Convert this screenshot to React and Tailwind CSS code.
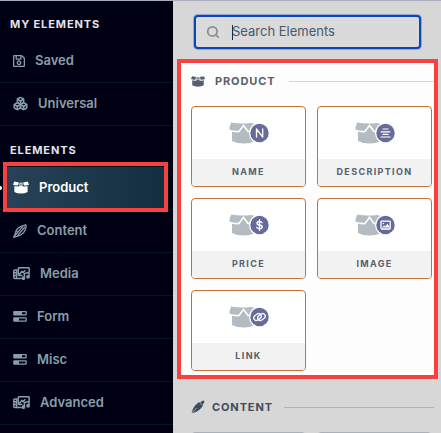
import { useState } from 'react'
import { Boxes, Search } from 'lucide-react'
import { FaRegSave } from 'react-icons/fa'

const BoxIcon = ({ className = 'w-4 h-[13px]' }) => (
  <svg viewBox="0 0 16 12" className={className} fill="currentColor" aria-hidden="true">
    <path d="M1.300 0 6 .9 4.900 3.900Q2.400 4.200 0 3.200Z" />
    <path d="M14.700 0 10 .9l1.100 3q2.500.3 4.900-.7Z" />
    <path d="M6.800.9h2.400l1.200 2.600-1 .5L8 2.600 6.600 4l-1-.5Z" opacity=".7" />
    <path d="M1.400 4.600q2.400.7 4.600.2L8 3.400l2 1.400q2.200.5 4.600-.2v5.800q-2.600 1.600-6.600 1.600t-6.600-1.600Z" />
  </svg>
)

const PenIcon = () => (
  <svg viewBox="0 0 13 13" className="w-3.5 h-3.5" fill="none" stroke="currentColor" strokeWidth="1.200" strokeLinejoin="round" strokeLinecap="round" aria-hidden="true">
    <path d="M.6 12.400 2 9.300C2.300 6.600 4.300 3.800 7 2.400L11.400.8 12.200 1 11.800 4.400C10.800 7.200 8 10 5 11Z" />
    <path d="M2 10.600 8.800 2.600M4.600 10.400 10.800 3M3.200 7l1.200.4" />
  </svg>
)

const SolidPenIcon = () => (
  <svg viewBox="0 0 13 13" className="w-3.5 h-3.5" fill="currentColor" aria-hidden="true">
    <path d="M.6 12.400 1.600 8.500C2.800 6 5 3.400 7.600 1.800l.8.8L10.600.6l1.800.2-.3 1.900-1.200 1.300.2 1.400C9.400 8 7 10.200 4.600 11.200Z" />
    <path d="M1.200 11.800 5.200 7.400M8.200 2.400l2.600 2.600" stroke="#d7d7d7" strokeWidth=".6" />
  </svg>
)

const MediaIcon = () => (
  <svg viewBox="0 0 17 13" className="w-[17px] h-[13px]" fill="none" stroke="currentColor" strokeWidth="1.500" strokeLinejoin="round" strokeLinecap="round" aria-hidden="true">
    <path d="M4 3H1.700Q.8 3 .8 4v6.500q0 1 .9 1H8M.8 5.800h2.600M.8 8.600h2.600M3.600 3v8.500" />
    <path d="M16.200 4.200V1.700q0-1-1-1H6.300q-1 0-1 1V7.500q0 1 1 1h2.500" />
    <path d="m6.500 7.200 2.400-2.800 1.300 1.300 1.600-2" />
    <path d="M11.400 11V6.600l4.600-1.300v4.300" />
    <circle cx="10.400" cy="11.200" r="1.100" fill="currentColor" />
    <circle cx="15" cy="9.800" r="1.100" fill="currentColor" />
  </svg>
)

const FormIcon = () => (
  <svg viewBox="0 0 14 11" className="w-3.5 h-[11px]" fill="currentColor" aria-hidden="true">
    <path fillRule="evenodd" d="M1.200 0h11.600q1 0 1 1v2.600q0 1-1 1H1.200q-1 0-1-1V1q0-1 1-1ZM9 1.300v2h3.500v-2Z" />
    <path fillRule="evenodd" d="M1.200 6.200h11.600q1 0 1 1v2.600q0 1-1 1H1.200q-1 0-1-1V7.200q0-1 1-1ZM6 7.500v2h6.500v-2Z" />
  </svg>
)

// glyphs drawn inside the round badge, centred on 30,11
const badges = {
  name: <path d="M27 15V7l6.200 8V7" />,
  description: <path d="M27.500 7h5M25.500 9.800h9M27.500 12.400h5M25.500 15h9" strokeWidth="1.200" />,
  price: <path d="M32.600 8.700Q32 7.500 30 7.500q-2.500 0-2.500 1.700T30 11q2.700.2 2.700 1.900T30 14.600q-2.200 0-2.800-1.300M30 5.700v10.700" />,
  image: (
    <>
      <rect x="25.500" y="7.200" width="9.200" height="7.800" rx=".8" />
      <path d="m26.500 13.600 2-2.200 1.200 1 2.200-2.600 2 2.600v1.200Z" fill="#fff" stroke="none" />
      <circle cx="27.900" cy="9.500" r=".8" fill="#fff" stroke="none" />
    </>
  ),
  link: (
    <>
      <rect x="24" y="8.400" width="8" height="5.200" rx="2.600" transform="rotate(-35 28 11)" />
      <rect x="28" y="8.400" width="8" height="5.200" rx="2.600" transform="rotate(-35 32 11)" />
    </>
  ),
}

const ElementIcon = ({ type }) => (
  <svg viewBox="0 0 40 23" className="w-10 h-[23px]" aria-hidden="true">
    <path d="M2.200.6Q12 2.400 22 .9l4 1V19q-5 2.600-11.500 2.600T3 19V9.600L.4 8 .6 5Z" fill="#b4bbc1" />
    <path d="M0 8.200Q5 9.900 10 9.500L14.500 3.400l4.500 6.100q2 .2 4-.4" fill="none" stroke="#fff" strokeWidth="1.600" />
    <circle cx="30.500" cy="11" r="10.500" fill="#fff" />
    <circle cx="30.500" cy="11" r="9.200" fill="#666b99" />
    <g transform="translate(.5 0)" fill="none" stroke="#fff" strokeWidth="1.300" strokeLinecap="round" strokeLinejoin="round">
      {badges[type]}
    </g>
  </svg>
)

const myElements = [
  { label: 'Saved', icon: <FaRegSave className="w-3 h-3.5" /> },
  { label: 'Universal', icon: <Boxes className="w-[15px] h-[15px]" strokeWidth={2.5} /> },
]

const elements = [
  { label: 'Product', icon: <BoxIcon /> },
  { label: 'Content', icon: <PenIcon /> },
  { label: 'Media', icon: <MediaIcon /> },
  { label: 'Form', icon: <FormIcon /> },
  { label: 'Misc', icon: <FormIcon /> },
  { label: 'Advanced', icon: <MediaIcon /> },
]

const productCards = [
  { type: 'name', label: 'NAME' },
  { type: 'description', label: 'DESCRIPTION' },
  { type: 'price', label: 'PRICE' },
  { type: 'image', label: 'IMAGE' },
  { type: 'link', label: 'LINK' },
]

function NavItem({ label, icon, active, onClick }) {
  return (
    <li className={`relative h-[43px] border-b border-[#04181f] ${active ? 'text-white' : 'text-[#8a9ea8]'}`}>
      <button
        onClick={onClick}
        className={`flex h-full w-full items-center gap-2.5 pl-[13px] pb-px text-left text-[13px] font-semibold ${active ? 'bg-gradient-to-r from-[#294458] to-[#112d40]' : ''}`}
      >
        {icon}
        {label}
      </button>
      {active && (
        <>
          <span className="absolute inset-y-0 right-0 w-[5px] bg-[#000014]" />
          <span className="absolute inset-y-0 left-0 w-[3px] bg-[#000014]" />
          <span className="absolute left-0 top-1/2 h-1 w-0.5 -translate-y-1/2 rounded-r-full bg-white" />
          <span className="absolute -top-[5px] -bottom-[3px] left-[3px] right-[5px] border-4 border-[#f64141]" />
        </>
      )}
    </li>
  )
}

function SectionTitle({ icon, gap, children }) {
  return (
    <div className={`flex h-4 items-center ${gap}`}>
      {icon}
      <h2 className="text-[11px] font-bold tracking-[0.08em]">{children}</h2>
      <span className="ml-1 h-px flex-1 bg-current opacity-25" />
    </div>
  )
}

export default function App() {
  const [active, setActive] = useState('Product')
  const [query, setQuery] = useState('')

  return (
    <div className="flex h-screen overflow-hidden border-t border-[#a9adc0] bg-[#d7d7d7] font-['Inter',sans-serif]">

      {/* Sidebar */}
      <nav className="w-[173px] shrink-0 bg-[#000014]">
        <h2 className="flex h-[39px] items-center pt-2 pl-2.5 text-[11px] font-bold tracking-[0.08em] text-[#e4e4ea]">MY ELEMENTS</h2>
        <ul>
          {myElements.map(e => (
            <NavItem key={e.label} {...e} active={active === e.label} onClick={() => setActive(e.label)} />
          ))}
        </ul>
        <h2 className="flex h-[41px] items-center pt-2 pl-2.5 text-[11px] font-bold tracking-[0.08em] text-[#e4e4ea]">ELEMENTS</h2>
        <ul>
          {elements.map(e => (
            <NavItem key={e.label} {...e} active={active === e.label} onClick={() => setActive(e.label)} />
          ))}
        </ul>
      </nav>

      {/* Elements panel */}
      <main className="min-w-0 flex-1 pl-1 pr-[3px]">
        <div className="pt-3.5 pb-2.5 pl-[17px] pr-[17px]">
          <label className="relative flex h-[34px] items-center gap-3 rounded border-2 border-[#0a49b4] bg-[#dadada] pl-2.5 ring-1 ring-[#93a9d3]">
            <Search className="h-3.5 w-3.5 shrink-0 text-[#898d93]" strokeWidth={3} />
            <input
              type="text"
              aria-label="Search Elements"
              placeholder="Search Elements"
              value={query}
              onChange={e => setQuery(e.target.value)}
              className="min-w-0 flex-1 bg-transparent text-[13px] text-[#34495e] caret-transparent outline-none placeholder:text-[#465869]"
            />
            {!query && <span className="absolute left-9 h-[15px] w-px bg-[#1c2b44]" />}
          </label>
        </div>

        <section className="border-4 border-[#f64141] bg-[#fdfdfd] pt-2.5 pb-1 pl-2.5 text-[#55606e]">
          <SectionTitle icon={<BoxIcon className="w-3.5 h-[11px]" />} gap="gap-2.5">PRODUCT</SectionTitle>
          <div className="mt-[17px] mr-0.5 grid grid-cols-2 gap-[11px]">
            {productCards.map(c => (
              <button key={c.type} className="flex h-[81px] flex-col overflow-hidden rounded-sm border border-[#c8703a] bg-white">
                <span className="flex w-full flex-1 items-center justify-center">
                  <ElementIcon type={c.type} />
                </span>
                <span className="flex h-[27px] w-full items-center justify-center bg-[#f2f2f2] pb-px text-[9px] font-bold tracking-[0.15em]">{c.label}</span>
              </button>
            ))}
          </div>
        </section>

        <section className="pt-5 pl-3.5 pr-1 text-[#3f4c5a]">
          <SectionTitle icon={<SolidPenIcon />} gap="gap-[7px]">CONTENT</SectionTitle>
          <div className="mt-[17px] mr-0.5 grid grid-cols-2 gap-[11px]">
            <span className="h-20 rounded-sm border border-[#a9b1bb]" />
            <span className="h-20 rounded-sm border border-[#a9b1bb]" />
          </div>
        </section>
      </main>
    </div>
  )
}
